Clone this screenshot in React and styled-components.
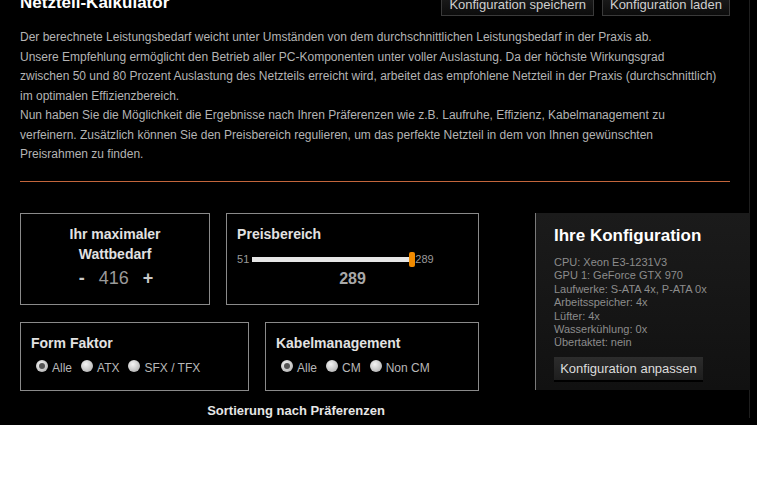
import React, { useState } from 'react';
import styled, { createGlobalStyle } from 'styled-components';

const GlobalStyle = createGlobalStyle`
  body {
    margin: 0;
    background: #fff;
    font-family: "Liberation Sans", Arial, sans-serif;
  }
`;

const Page = styled.div`
  width: 757px;
  height: 425px;
  background: #000;
  overflow: hidden;
`;

const Inner = styled.div`
  width: 750px;
  height: 100%;
  border-right: 1px solid #1e1e1e;
  box-sizing: border-box;
  padding: 0 19px 0 20px;
`;

const Header = styled.div`
  display: flex;
  justify-content: space-between;
  align-items: flex-start;
  margin-top: -7px;
`;

const Title = styled.h1`
  margin: 0;
  font-size: 17px;
  font-weight: bold;
  color: #fff;
  line-height: 20px;
`;

const HeadButtons = styled.div`
  display: flex;
  gap: 8px;
`;

const DarkButton = styled.button`
  height: 23px;
  padding: 0 7px;
  border: 1px solid #3a3a3a;
  background: linear-gradient(#1e1e1e, #0c0c0c);
  color: #cfcfcf;
  font-family: "Liberation Sans", Arial, sans-serif;
  font-size: 13px;
  cursor: pointer;
`;

const Intro = styled.p`
  margin: 12px 0 0;
  height: 137px;
  font-size: 12px;
  line-height: 19.5px;
  color: #b4b4b4;
  white-space: nowrap;
`;

const Divider = styled.div`
  margin-top: 16px;
  height: 0;
  border-top: 1px solid #c4663c;
`;

const Bottom = styled.div`
  display: flex;
  margin-top: 31px;
  margin-right: -19px;
`;

const LeftCol = styled.div`
  width: 459px;
  flex-shrink: 0;
  display: flex;
  flex-direction: column;
  gap: 17px;
`;

const Row = styled.div`
  display: flex;
  gap: 16px;
`;

const Box = styled.div`
  width: ${(p) => p.w}px;
  height: ${(p) => p.h}px;
  box-sizing: border-box;
  border: 1px solid #8a8a8a;
  padding: ${(p) => (p.center ? '10px 0 0' : '10px 10px 0')};
  text-align: ${(p) => (p.center ? 'center' : 'left')};
`;

const BoxTitle = styled.div`
  font-size: 14px;
  font-weight: bold;
  color: #e2e2e2;
  line-height: 20px;
`;

const Stepper = styled.div`
  display: flex;
  justify-content: center;
  align-items: center;
  gap: 14px;
  margin-top: 4px;
  margin-left: 2px;
`;

const StepSign = styled.span`
  font-size: 18px;
  font-weight: bold;
  color: #c8c8c8;
  cursor: pointer;
`;

const Watt = styled.span`
  font-size: 18px;
  color: #9a9a9a;
`;

const SliderRow = styled.div`
  display: flex;
  align-items: center;
  margin-top: 9px;
  font-size: 11px;
  color: #9a9a9a;
`;

const Track = styled.div`
  position: relative;
  width: 160px;
  height: 5px;
  margin: 0 3px;
  background: #e6e6e6;
`;

const Handle = styled.div`
  position: absolute;
  right: -3px;
  top: -5px;
  width: 6px;
  height: 15px;
  border-radius: 2px;
  background: #f08a00;
`;

const Price = styled.div`
  margin-top: 5px;
  text-align: center;
  font-size: 16px;
  font-weight: bold;
  color: #a8a8a8;
`;

const Radios = styled.div`
  display: flex;
  align-items: center;
  margin-top: 8px;
  margin-left: 5px;
  gap: 9px;
`;

const RadioItem = styled.label`
  display: flex;
  align-items: center;
  gap: 4px;
  font-size: 12px;
  color: #b8b8b8;
  cursor: pointer;
`;

const Dot = styled.span`
  position: relative;
  top: -2px;
  width: 12px;
  height: 12px;
  border-radius: 50%;
  background: radial-gradient(circle at 40% 35%, #f4f4f4, #bdbdbd 70%, #9a9a9a);

  &::after {
    content: '';
    display: ${(p) => (p.on ? 'block' : 'none')};
    position: absolute;
    left: 3px;
    top: 3px;
    width: 6px;
    height: 6px;
    border-radius: 50%;
    background: #555;
  }
`;

const SortTitle = styled.div`
  width: 552px;
  margin-top: -5px;
  text-align: center;
  font-size: 13px;
  font-weight: bold;
  color: #e6e6e6;
`;

const ConfigPanel = styled.div`
  width: 215px;
  height: 177px;
  flex-shrink: 0;
  margin-left: 56px;
  box-sizing: border-box;
  border-left: 1px solid #7a7a7a;
  background: linear-gradient(#1b1b1b, #111);
  padding: 13px 0 0 18px;
`;

const ConfigTitle = styled.div`
  font-size: 17px;
  font-weight: bold;
  color: #fff;
  line-height: 20px;
`;

const SpecList = styled.ul`
  list-style: none;
  margin: 10px 0 0;
  padding: 0;
  font-size: 11px;
  line-height: 13.4px;
  color: #8c8c8c;
`;

const AdjustButton = styled.button`
  margin-top: 7px;
  height: 25px;
  width: 149px;
  padding: 0;
  border: none;
  border-bottom: 2px solid #000;
  background: linear-gradient(#2c2c2c, #1e1e1e);
  color: #dcdcdc;
  font-family: "Liberation Sans", Arial, sans-serif;
  font-size: 13px;
  text-align: center;
  cursor: pointer;
`;

const specs = [
  'CPU: Xeon E3-1231V3',
  'GPU 1: GeForce GTX 970',
  'Laufwerke: S-ATA 4x, P-ATA 0x',
  'Arbeitsspeicher: 4x',
  'Lüfter: 4x',
  'Wasserkühlung: 0x',
  'Übertaktet: nein',
];

const introLines = [
  'Der berechnete Leistungsbedarf weicht unter Umständen von dem durchschnittlichen Leistungsbedarf in der Praxis ab.',
  'Unsere Empfehlung ermöglicht den Betrieb aller PC-Komponenten unter voller Auslastung. Da der höchste Wirkungsgrad',
  'zwischen 50 und 80 Prozent Auslastung des Netzteils erreicht wird, arbeitet das empfohlene Netzteil in der Praxis (durchschnittlich)',
  'im optimalen Effizienzbereich.',
  'Nun haben Sie die Möglichkeit die Ergebnisse nach Ihren Präferenzen wie z.B. Laufruhe, Effizienz, Kabelmanagement zu',
  'verfeinern. Zusätzlich können Sie den Preisbereich regulieren, um das perfekte Netzteil in dem von Ihnen gewünschten',
  'Preisrahmen zu finden.',
];

const RadioGroup = ({ options, value, onChange }) => (
  <Radios>
    {options.map((o) => (
      <RadioItem key={o} onClick={() => onChange(o)}>
        <Dot on={value === o} />
        {o}
      </RadioItem>
    ))}
  </Radios>
);

const App = () => {
  const [watt, setWatt] = useState(416);
  const [form, setForm] = useState('Alle');
  const [cable, setCable] = useState('Alle');

  return (
    <Page>
      <GlobalStyle />
      <Inner>
        <Header>
          <Title>Netzteil-Kalkulator</Title>
          <HeadButtons>
            <DarkButton>Konfiguration speichern</DarkButton>
            <DarkButton>Konfiguration laden</DarkButton>
          </HeadButtons>
        </Header>
        <Intro>
          {introLines.map((l, i) => (
            <React.Fragment key={i}>
              {l}
              <br />
            </React.Fragment>
          ))}
        </Intro>
        <Divider />
        <Bottom>
          <LeftCol>
            <Row>
              <Box w={191} h={92} center>
                <BoxTitle>Ihr maximaler<br />Wattbedarf</BoxTitle>
                <Stepper>
                  <StepSign onClick={() => setWatt(watt - 1)}>-</StepSign>
                  <Watt>{watt}</Watt>
                  <StepSign onClick={() => setWatt(watt + 1)}>+</StepSign>
                </Stepper>
              </Box>
              <Box w={254} h={92}>
                <BoxTitle>Preisbereich</BoxTitle>
                <SliderRow>
                  51
                  <Track><Handle /></Track>
                  289
                </SliderRow>
                <Price>289</Price>
              </Box>
            </Row>
            <Row>
              <Box w={230} h={69}>
                <BoxTitle>Form Faktor</BoxTitle>
                <RadioGroup options={['Alle', 'ATX', 'SFX / TFX']} value={form} onChange={setForm} />
              </Box>
              <Box w={215} h={69}>
                <BoxTitle>Kabelmanagement</BoxTitle>
                <RadioGroup options={['Alle', 'CM', 'Non CM']} value={cable} onChange={setCable} />
              </Box>
            </Row>
            <SortTitle>Sortierung nach Präferenzen</SortTitle>
          </LeftCol>
          <ConfigPanel>
            <ConfigTitle>Ihre Konfiguration</ConfigTitle>
            <SpecList>
              {specs.map((s) => (
                <li key={s}>{s}</li>
              ))}
            </SpecList>
            <AdjustButton>Konfiguration anpassen</AdjustButton>
          </ConfigPanel>
        </Bottom>
      </Inner>
    </Page>
  );
};

export default App;
